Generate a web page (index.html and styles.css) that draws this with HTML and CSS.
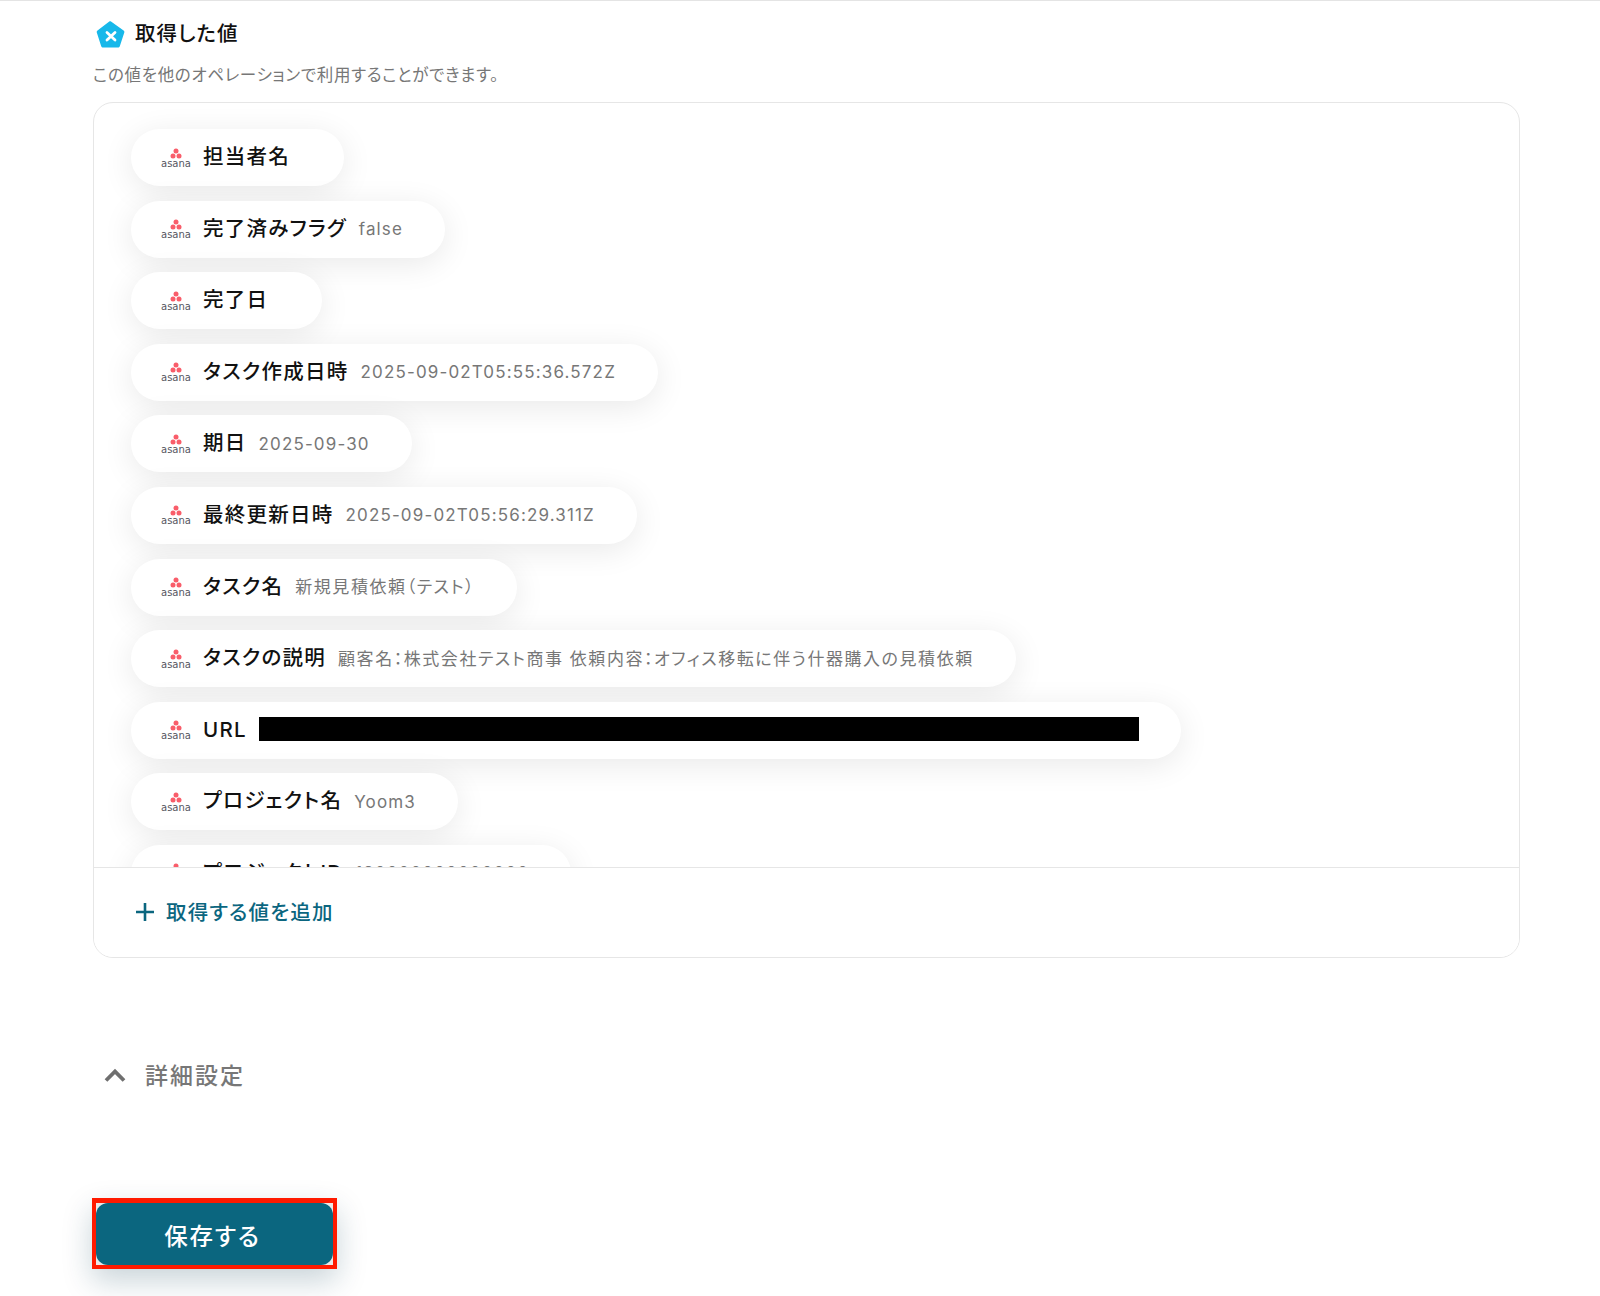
FILE: index.html
```html
<!DOCTYPE html>
<html lang="ja">
<head>
<meta charset="utf-8">
<title>取得した値</title>
<link rel="stylesheet" href="styles.css">
</head>
<body>
<svg width="0" height="0" class="defs">
  <symbol id="dots" viewBox="0 0 30 11">
    <circle cx="15" cy="3" r="2.500" fill="#f95d6a"/>
    <circle cx="12" cy="8" r="2.500" fill="#f95d6a"/>
    <circle cx="18" cy="8" r="2.500" fill="#f95d6a"/>
  </symbol>
</svg>
<main class="page">
  <header class="head">
    <svg class="pent" viewBox="0 0 30 30" width="30" height="30">
      <path d="M15 1.500 27.600 10.400c.7.500 1 1.400.7 2.200l-4.500 13.600c-.3.800-1 1.300-1.900 1.300H7.100c-.9 0-1.600-.5-1.900-1.300L.8 12.600c-.3-.8 0-1.700.7-2.200L13.300 1.500c.5-.4 1.200-.4 1.700 0z" fill="#17b8ea"/>
      <path d="M11 12.500 19 20M19 12.500 11 20" stroke="#fff" stroke-width="2.800" stroke-linecap="round"/>
    </svg>
    <h2 class="title">取得した値</h2>
  </header>
  <p class="desc">この値を他のオペレーションで利用することができます。</p>

  <section class="card">
    <div class="list">
      <div class="pill"><span class="logo"><svg class="dots"><use href="#dots"/></svg><span class="word">asana</span></span><b class="key">担当者名</b></div>
      <div class="pill"><span class="logo"><svg class="dots"><use href="#dots"/></svg><span class="word">asana</span></span><b class="key">完了済みフラグ</b><span class="val">false</span></div>
      <div class="pill"><span class="logo"><svg class="dots"><use href="#dots"/></svg><span class="word">asana</span></span><b class="key">完了日</b></div>
      <div class="pill"><span class="logo"><svg class="dots"><use href="#dots"/></svg><span class="word">asana</span></span><b class="key">タスク作成日時</b><span class="val">2025-09-02T05:55:36.572Z</span></div>
      <div class="pill"><span class="logo"><svg class="dots"><use href="#dots"/></svg><span class="word">asana</span></span><b class="key">期日</b><span class="val">2025-09-30</span></div>
      <div class="pill"><span class="logo"><svg class="dots"><use href="#dots"/></svg><span class="word">asana</span></span><b class="key">最終更新日時</b><span class="val">2025-09-02T05:56:29.311Z</span></div>
      <div class="pill"><span class="logo"><svg class="dots"><use href="#dots"/></svg><span class="word">asana</span></span><b class="key">タスク名</b><span class="val val-ja">新規見積依頼（テスト）</span></div>
      <div class="pill"><span class="logo"><svg class="dots"><use href="#dots"/></svg><span class="word">asana</span></span><b class="key">タスクの説明</b><span class="val val-ja">顧客名：株式会社テスト商事 依頼内容：オフィス移転に伴う什器購入の見積依頼</span></div>
      <div class="pill"><span class="logo"><svg class="dots"><use href="#dots"/></svg><span class="word">asana</span></span><b class="key">URL</b><span class="redact"></span></div>
      <div class="pill"><span class="logo"><svg class="dots"><use href="#dots"/></svg><span class="word">asana</span></span><b class="key">プロジェクト名</b><span class="val">Yoom3</span></div>
      <div class="pill"><span class="logo"><svg class="dots"><use href="#dots"/></svg><span class="word">asana</span></span><b class="key">プロジェクトID</b><span class="val">120000000000000</span></div>
    </div>
    <div class="foot">
      <svg class="plus" viewBox="0 0 20 20" width="20" height="20"><path d="M10 1v18M1 10h18" stroke="#0b667f" stroke-width="2.600"/></svg>
      <span class="add">取得する値を追加</span>
    </div>
  </section>

  <div class="detail">
    <svg class="chev" viewBox="0 0 22 14" width="22" height="14"><path d="M2 12.500 11 3.500 20 12.500" fill="none" stroke="#6f6f6f" stroke-width="3.800"/></svg>
    <span class="detail-text">詳細設定</span>
  </div>

  <div class="save-mark"><button class="save" type="button">保存する</button></div>
</main>
</body>
</html>
```
FILE: styles.css
```css
* { box-sizing: border-box; }
html, body { margin: 0; padding: 0; background: #fff; }
body {
  height: 1296px;
  overflow: hidden;
  font-family: Inter, "Noto Sans CJK JP", sans-serif;
  font-feature-settings: "palt";
  color: #111;
  border-top: 1px solid #e4e4e4;
}
.defs { position: absolute; }
.page { padding: 0 80px 0 93px; }
.head { display: flex; align-items: center; padding: 18px 0 0 3px; gap: 9px; height: 50px; }
.pent { flex: none; }
.title { margin: 0 0 2px; font-size: 20.500px; font-weight: 500; letter-spacing: 1px; line-height: 30px; }
.desc { margin: 13px 0 0; height: 22px; font-size: 16.500px; line-height: 22px; color: #777; letter-spacing: .68px; }
.card {
  margin-top: 16px;
  height: 856px;
  border: 1px solid #e6e6e6;
  border-radius: 20px;
  overflow: hidden;
}
.list {
  height: 764px;
  overflow: hidden;
  padding: 26px 0 0 37px;
  display: flex;
  flex-direction: column;
  align-items: flex-start;
  gap: 14.600px;
}
.pill {
  flex: none;
  height: 57px;
  display: flex;
  align-items: center;
  padding: 0 42px 0 30px;
  border-radius: 29px;
  background: #fff;
  box-shadow: 0 6px 32px rgba(0,0,0,.09);
}
.logo { width: 30px; height: 20px; flex: none; margin-right: 12px; display: flex; flex-direction: column; align-items: center; }
.dots { width: 30px; height: 11px; flex: none; }
.word { font-family: "DejaVu Sans", sans-serif; font-size: 10px; line-height: 9px; letter-spacing: 0; color: #555560; }
.key { font-size: 20.500px; font-weight: 500; letter-spacing: 1.250px; white-space: nowrap; color: #111; margin: 0 12px 1px 0; line-height: 30px; }
.val { font-size: 17px; letter-spacing: 1.150px; color: #777; white-space: nowrap; }
.val-ja { letter-spacing: 1.550px; margin-bottom: 3px; }
.redact { width: 880px; height: 24px; background: #000; margin: 0 0 3px 0; }
.foot {
  height: 90px;
  border-top: 1px solid #e6e6e6;
  display: flex;
  align-items: center;
  padding: 0 0 1px 41px;
  gap: 11px;
  background: #fff;
}
.add { font-size: 20.500px; font-weight: 500; color: #0b667f; letter-spacing: 1.150px; margin-bottom: 2px; }
.detail { margin-top: 97px; display: flex; align-items: center; padding-left: 11px; gap: 19px; height: 40px; }
.detail-text { font-size: 23px; font-weight: 500; color: #777; letter-spacing: 2px; margin-bottom: 2px; }
.save-mark {
  margin: 103px 0 0 -1px;
  width: 245px;
  height: 71px;
  border: 4px solid #ff1a00;
  border-top-width: 5px;
  background: #e9e9e9;
  box-shadow: 0 12px 30px rgba(11,60,80,.22);
}
.save {
  display: block;
  width: 100%;
  height: 100%;
  border: 0;
  border-radius: 12px;
  background: #0b667f;
  color: #fff;
  font: 500 23.500px Inter, "Noto Sans CJK JP", sans-serif;
  font-feature-settings: "palt";
  letter-spacing: 1.800px;
  padding: 2px 4px 0 0;
}
```
